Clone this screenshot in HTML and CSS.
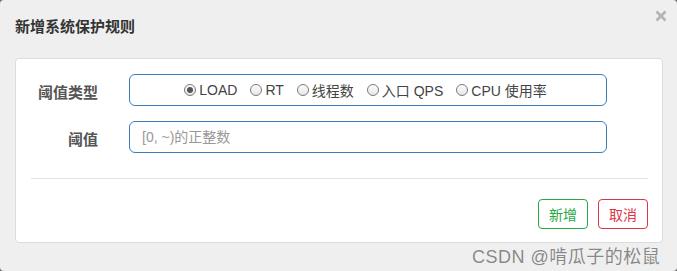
FILE: index.html
```html
<!DOCTYPE html>
<html lang="zh">
<head>
    <meta charset="UTF-8">
    <meta name="viewport" content="width=device-width, initial-scale=1.0">
    <title>新增系统保护规则</title>
    <link rel="stylesheet" href="styles.css">
</head>
<body>
    <div class="modal">
        <div class="modal-header">
            <h4 class="modal-title">新增系统保护规则</h4>
            <span class="close">
                <svg width="12" height="12" viewBox="0 0 12 12">
                    <path d="M1.5 1.5 L10.5 10.5 M10.5 1.5 L1.5 10.5" stroke="#b3b3b3" stroke-width="2.6" fill="none"/>
                </svg>
            </span>
        </div>
        <div class="card">
            <div class="form-row">
                <label class="form-label">阈值类型</label>
                <div class="form-control radios">
                    <label class="radio"><input type="radio" name="grade" checked>LOAD</label>
                    <label class="radio"><input type="radio" name="grade">RT</label>
                    <label class="radio"><input type="radio" name="grade">线程数</label>
                    <label class="radio"><input type="radio" name="grade">入口 QPS</label>
                    <label class="radio"><input type="radio" name="grade">CPU 使用率</label>
                </div>
            </div>
            <div class="form-row">
                <label class="form-label">阈值</label>
                <input class="form-control" type="text" placeholder="[0, ~)的正整数">
            </div>
            <hr class="divider">
            <div class="actions">
                <button class="btn btn-add">新增</button>
                <button class="btn btn-cancel">取消</button>
            </div>
        </div>
        <div class="watermark">CSDN @啃瓜子的松鼠</div>
    </div>
</body>
</html>
```

FILE: styles.css
```css
html {
    background: #6b6b6b;
}

body {
    margin: 0;
    font-family: "Liberation Sans", "Noto Sans CJK SC", sans-serif;
}

.modal {
    position: relative;
    width: 677px;
    height: 271px;
    box-sizing: border-box;
    padding: 0 14px 0 15px;
    background: #efefef;
    border-radius: 4px;
}

.modal-header {
    position: relative;
    padding-top: 17px;
    height: 58px;
    box-sizing: border-box;
}

.modal-title {
    margin: 0;
    font-size: 15px;
    line-height: 20px;
    font-weight: bold;
    color: #333;
}

.close {
    position: absolute;
    top: 10px;
    right: -4px;
    width: 12px;
    height: 12px;
    line-height: 0;
    cursor: pointer;
}

.card {
    height: 185px;
    box-sizing: border-box;
    padding-top: 15px;
    background: #fff;
    border: 1px solid #dcdcdc;
    border-radius: 4px;
}

.form-row {
    display: flex;
    align-items: center;
    margin-bottom: 15px;
}

.form-label {
    width: 82px;
    margin-right: 31px;
    padding-top: 2px;
    text-align: right;
    font-size: 15px;
    font-weight: bold;
    color: #555;
}

.form-control {
    width: 478px;
    height: 32px;
    box-sizing: border-box;
    border: 1px solid #3a7dbf;
    border-radius: 6px;
    background: #fff;
    font-family: inherit;
    font-size: 14px;
    color: #444;
    padding: 0 12px;
    outline: none;
}

.form-control::placeholder {
    color: #999;
}

.radios {
    display: flex;
    align-items: center;
    justify-content: center;
    gap: 13px;
    padding-right: 17px;
}

.radio {
    display: flex;
    align-items: center;
    gap: 3px;
    font-size: 14px;
    color: #444;
}

.radio input {
    appearance: none;
    margin: 0;
    width: 12px;
    height: 12px;
    border: 1px solid #7a7a7a;
    border-radius: 50%;
    background: linear-gradient(#fdfdfd, #e6e6e6);
    display: grid;
    place-content: center;
}

.radio input:checked::before {
    content: "";
    width: 6px;
    height: 6px;
    border-radius: 50%;
    background: #555;
}

.divider {
    margin: 25px 14px 0 15px;
    border: 0;
    border-top: 1px solid #e3e3e3;
}

.actions {
    display: flex;
    justify-content: flex-end;
    gap: 10px;
    margin: 20px 14px 0 0;
}

.btn {
    width: 50px;
    height: 30px;
    padding: 0;
    background: #fff;
    border: 1px solid;
    border-radius: 4px;
    font-family: inherit;
    font-size: 14px;
    cursor: pointer;
}

.btn-add {
    color: #28a745;
    border-color: #28a745;
}

.btn-cancel {
    color: #dc3545;
    border-color: #dc3545;
}

.watermark {
    position: absolute;
    left: 472px;
    top: 242px;
    font-size: 18px;
    letter-spacing: 0.5px;
    color: #888;
    text-shadow: 0 0 1px #fff;
    white-space: nowrap;
}
```
